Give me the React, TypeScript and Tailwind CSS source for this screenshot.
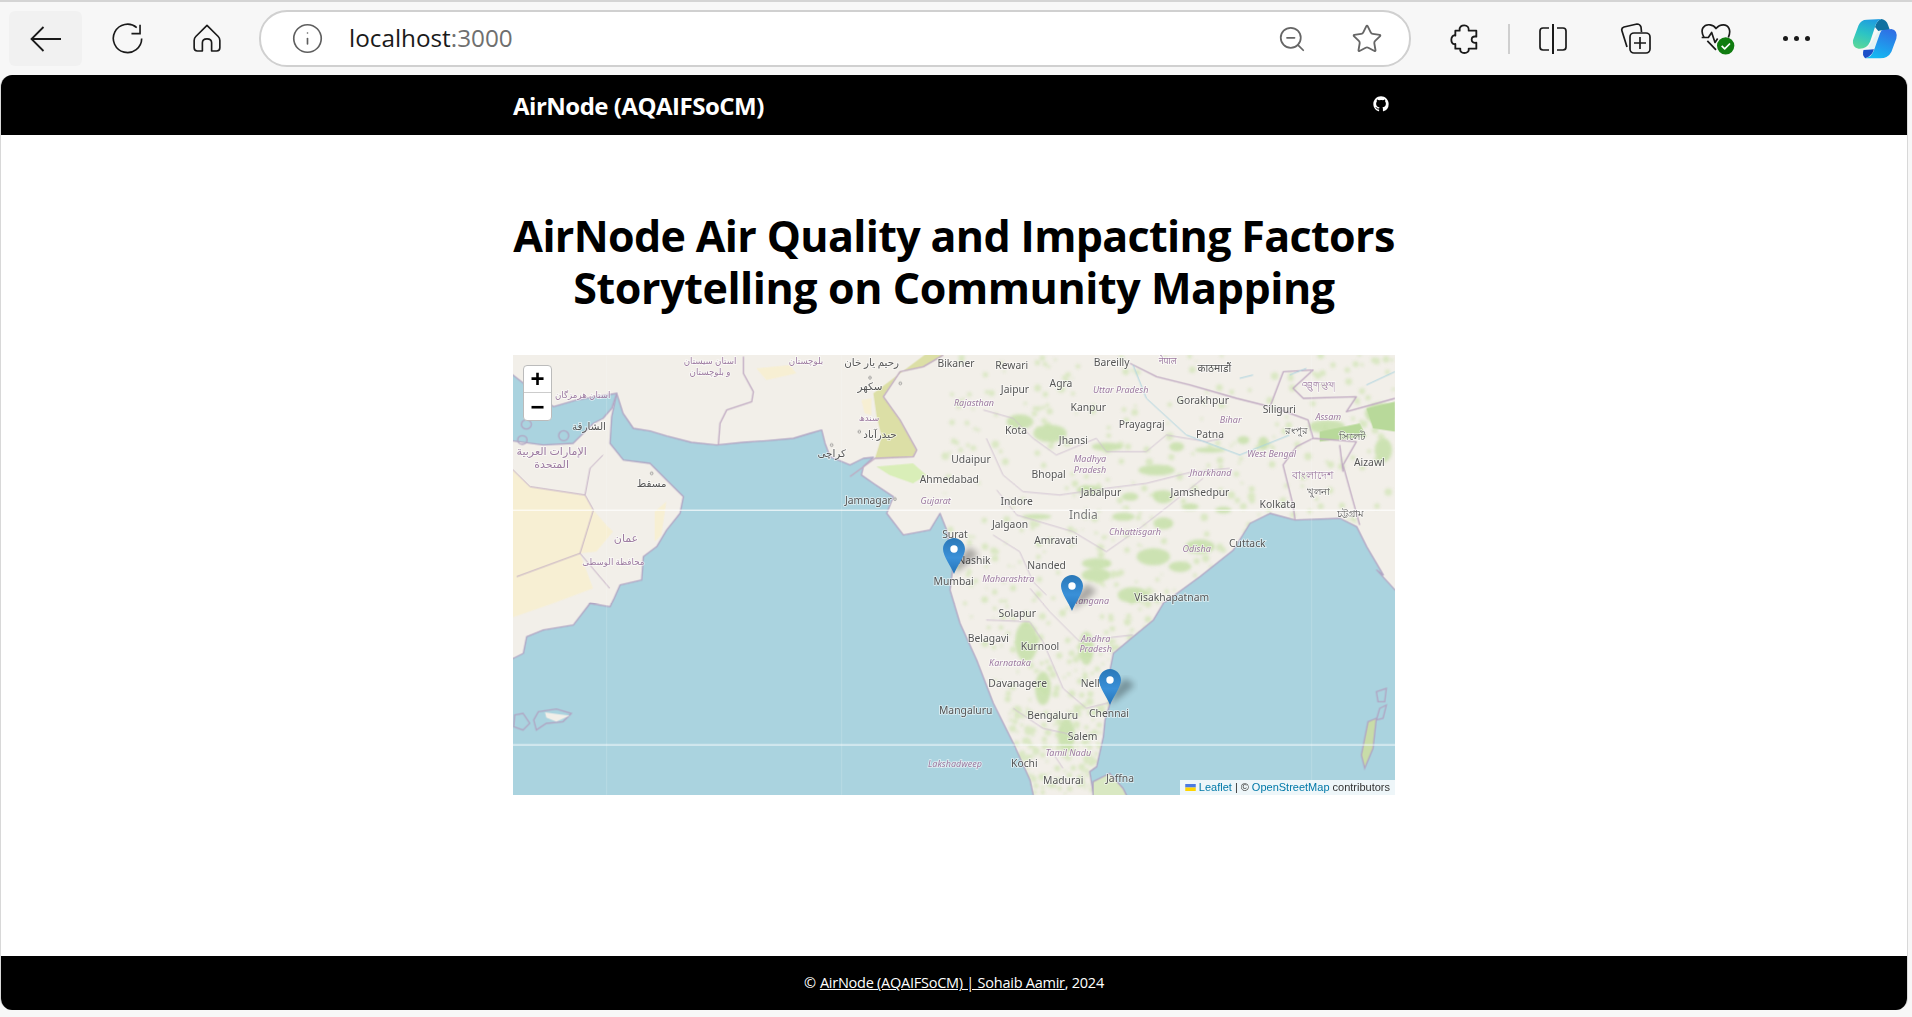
import { Info, Star, ZoomOut } from "lucide-react";

const segoe = "font-['Open_Sans','Noto_Sans',sans-serif]";

type Label = [string, number, number, string?];

// positions are in 3x map units, grouped by the crop they were read from
const westLabels: Label[] = [
  ["استان سیستان", 600, 33, "s"], ["و بلوچستان", 600, 67, "s"], ["بلوچستان", 888, 33, "s"],
  ["استان هرمزگان", 218, 135, "s"], ["عمان", 348, 565, "S"], ["محافظة الوسطى", 310, 635, "s"],
  ["الإمارات العربية", 125, 302, "S"], ["المتحدة", 125, 343, "S"], ["سندھ", 1077, 205, "s"],
  ["رحیم یار خان", 1085, 37], ["سکھر", 1080, 110], ["الشارقة", 237, 228], ["مسقط", 425, 400],
  ["کراچی", 965, 310], ["حیدرآباد", 1110, 252], ["Jamnagar", 1075, 450], ["Ahmedabad", 1318, 388],
  ["Gujarat", 1277, 453, "i"], ["Surat", 1335, 553],
];

const eastLabels: Label[] = [
  ["Bikaner", 18, 40], ["Rewari", 185, 47], ["Bareilly", 485, 38], ["नेपाल", 653, 32, "s"], ["काठमाडौं", 793, 55],
  ["འབྲུག་ཡུལ།", 1105, 105, "s"], ["Agra", 333, 100], ["Jaipur", 195, 118], ["Uttar Pradesh", 512, 121, "i"], ["Kanpur", 415, 172],
  ["Gorakhpur", 758, 152], ["Rajasthan", 72, 160, "i"], ["Siliguri", 988, 177], ["Assam", 1135, 200, "i"],
  ["Kota", 198, 240], ["Prayagraj", 575, 222], ["Bihar", 842, 210, "i"], ["Patna", 780, 253],
  ["রংপুর", 1040, 240], ["সিলেট", 1205, 258], ["Jhansi", 370, 270], ["Udaipur", 63, 327],
  ["Madhya", 420, 327, "i"], ["Pradesh", 420, 360, "i"], ["West Bengal", 965, 313, "i"], ["Aizawl", 1258, 338],
  ["Bhopal", 296, 372], ["Jharkhand", 782, 368, "i"], ["বাংলাদেশ", 1088, 376, "S"], ["Jabalpur", 453, 428],
  ["Jamshedpur", 750, 428], ["খুলনা", 1105, 423], ["Indore", 200, 454], ["Kolkata", 983, 462],
  ["India", 400, 493, "C"], ["চট্টগ্রাম", 1203, 490], ["Jalgaon", 180, 523], ["Chhattisgarh", 555, 547, "i"],
  ["Amravati", 318, 571], ["Cuttack", 892, 581], ["Odisha", 740, 598, "i"], ["Nashik", 72, 632], ["Nanded", 290, 645],
];

const southLabels: Label[] = [
  ["Maharashtra", 175, 28, "i"], ["Mumbai", 11, 35], ["Visakhapatnam", 665, 82], ["Telangana", 415, 93, "i"],
  ["Solapur", 202, 130], ["Belagavi", 115, 205], ["Kurnool", 270, 228], ["Andhra", 437, 207, "i"],
  ["Pradesh", 437, 238, "i"], ["Karnataka", 180, 278, "i"], ["Davanagere", 203, 340], ["Nellore", 445, 340],
  ["Mangaluru", 47, 421], ["Bengaluru", 308, 437], ["Chennai", 477, 430], ["Salem", 398, 498],
  ["Tamil Nadu", 355, 548, "i"], ["Lakshadweep", 15, 581, "i"], ["Kochi", 223, 581], ["Madurai", 340, 630],
  ["Jaffna", 510, 626],
];

const greens: [number, number, number, number][] = [
  [210, 215, 40, 22], [300, 250, 50, 26], [470, 290, 45, 12], [620, 360, 55, 16], [680, 290, 22, 14], [640, 440, 30, 20],
  [420, 420, 40, 14], [540, 440, 25, 12], [1130, 230, 55, 20], [1290, 190, 45, 32], [780, 300, 45, 8], [880, 270, 18, 12],
  [940, 280, 16, 20], [1300, 300, 26, 36], [720, 470, 26, 10], [640, 520, 30, 18], [520, 500, 34, 12],
  [750, 590, 44, 22], [610, 620, 50, 26], [820, 480, 24, 10], [260, 500, 44, 8], [440, 640, 44, 16], [690, 650, 34, 16],
  [229, 875, 34, 60], [279, 1015, 24, 50], [349, 1155, 26, 50], [409, 895, 22, 50], [549, 735, 46, 24], [439, 675, 44, 20],
];

// fine vegetation specks, seeded so the picture stays the same on each load
const specks: [number, number, number][] = [];
let seed = 7;
const rnd = () => {
  seed = (seed * 16807) % 2147483647;
  return seed / 2147483647;
};
for (let i = 0; i < 700; i++) {
  const y = rnd() * 1320;
  const left = y < 650 ? 1290 : 1320 + (y - 650) * 0.35;
  const right = y < 520 ? 2646 : 2300 - (y - 520) * 0.7;
  const x = left + rnd() * (right - left);
  specks.push([Math.round(x), Math.round(y), Math.round(3 + rnd() * 8)]);
}

function MapLabels({ labels }: { labels: Label[] }) {
  return (
    <>
      {labels.map(([text, x, y, kind]) => {
        const purple = kind === "s" || kind === "S" || kind === "i";
        const size = kind === "C" ? 36 : kind === "S" ? 33 : kind === "i" ? 27 : kind === "s" ? 26 : 31;
        return (
          <text
            key={text + x}
            x={x}
            y={y + size * 0.35}
            textAnchor="middle"
            fontSize={size}
            fontStyle={kind === "i" ? "italic" : "normal"}
            fill={purple ? "#9c7aa0" : kind === "C" ? "#7a7a7a" : "#555555"}
            stroke="#ffffff"
            strokeOpacity={0.6}
            strokeWidth={5}
            paintOrder="stroke"
          >
            {text}
          </text>
        );
      })}
    </>
  );
}

function MapArt() {
  return (
    <svg viewBox="0 0 2646 1320" className="block w-full h-full font-['Noto_Sans','DejaVu_Sans',sans-serif]">
      <defs>
        <filter id="soft"><feGaussianBlur stdDeviation="1.8" /></filter>
        <filter id="softer"><feGaussianBlur stdDeviation="4" /></filter>
        <filter id="labels"><feGaussianBlur stdDeviation="0.9" /></filter>
      </defs>
      <rect width="2646" height="1320" fill="#f2efe9" />
      <g filter="url(#soft)">
        <path fill="#f7efd3" d="M-10 335 L51 395 L216 420 L241 465 L280 510 L300 530 L250 590 L201 595 L240 700 L120 745 L-10 790 Z" />
        <path fill="#f7efd3" d="M730 40 L830 30 L850 55 L760 75 Z M1045 135 L1075 130 L1075 180 L1055 175 Z M425 470 L460 440 L445 540 L425 560 Z" />
        <path fill="#dcdfa6" d="M1291 0 L1231 35 L1161 50 L1111 125 L1161 195 L1211 285 L1201 305 L1086 310 L1106 245 L1091 185 L1081 115 L1121 85 L1181 40 L1241 -5 Z" />
        <path fill="#d9eeb8" d="M1090 335 L1200 325 L1240 360 L1200 385 L1130 360 Z" />
        <g filter="url(#softer)" fill="#cfe4b2" opacity="0.7">
          {specks.map(([cx, cy, r], i) => <circle key={i} cx={cx} cy={cy} r={r} />)}
        </g>
        <g transform="translate(1311,-15)" filter="url(#softer)" fill="#c6e0a9" opacity="0.85">
          {greens.map(([cx, cy, rx, ry]) => <ellipse key={cx + "-" + cy} cx={cx} cy={cy} rx={rx} ry={ry} />)}
        </g>
        <path fill="#b8d99a" d="M2420 230 L2540 205 L2560 245 L2420 260 Z M2560 160 L2646 140 L2646 230 L2580 220 Z" />

        {/* sea */}
        <g fill="#aad3df" stroke="#b1a6c4" strokeWidth="4" strokeLinejoin="round">
          <path d="M311 115 L330 175 L361 220 L411 228 L461 243 L535 262 L611 270 L690 262 L761 257 L841 250 L891 235 L926 225 L936 265 L951 305 L1011 330 L1051 310 L1081 307 L1051 335 L1045 360 L1081 385 L1141 425 L1121 475 L1171 540 L1251 525 L1281 475 L1301 525 L1321 625 L1311 705 L1341 805 L1391 915 L1441 1045 L1501 1165 L1551 1275 L1565 1340 L-20 1340 L-20 915 L1 910 L31 895 L41 845 L91 825 L181 810 L231 745 L291 755 L301 735 L321 690 L386 675 L391 605 L431 575 L461 525 L501 475 L511 425 L461 375 L411 325 L331 315 L291 265 L296 185 Z" />
          <path d="M2666 705 L2646 705 L2591 645 L2611 660 L2561 575 L2531 515 L2481 490 L2346 495 L2271 475 L2211 505 L2161 585 L2061 665 L1951 745 L1921 795 L1861 845 L1801 895 L1791 945 L1791 1045 L1776 1095 L1771 1145 L1751 1235 L1730 1250 L1745 1340 L2666 1340 Z" />
          <path d="M-20 50 L0 60 L121 155 L191 135 L311 115 L296 160 L270 190 L241 205 L180 265 L91 270 L-20 255 Z" />
        </g>
        <g fill="#f2efe9" stroke="#b1a6c4" strokeWidth="4">
          <path d="M1740 1280 L1790 1255 L1830 1300 L1850 1340 L1740 1340 Z" fill="#d9e8c2" />
          <path d="M76 1070 L130 1062 L175 1075 L150 1100 L100 1105 L70 1125 L62 1095 Z" fill="#aad3df" />
          <path d="M96 1072 L140 1078 L170 1082 L130 1100 L100 1088 Z" stroke="none" />
          <path d="M5 1080 L30 1075 L50 1105 L30 1125 L2 1115 Z" fill="#aad3df" />
          <path d="M2590 1010 L2620 1000 L2615 1040 L2595 1040 Z" fill="#aad3df" />
          <path d="M2600 1060 L2620 1050 L2610 1090 L2590 1095 Z" fill="#aad3df" />
          <path d="M2565 1100 L2590 1090 L2580 1180 L2555 1240 L2545 1200 Z" fill="#c8dca8" />
          <ellipse cx="40" cy="208" rx="15" ry="14" fill="none" />
          <ellipse cx="28" cy="255" rx="14" ry="13" fill="none" />
          <ellipse cx="152" cy="242" rx="15" ry="15" fill="none" />
        </g>

        {/* borders */}
        <g fill="none" stroke="#c0aac2" strokeWidth="4" strokeLinejoin="round">
          <path d="M691 5 L691 55 L721 110 L716 140 L641 165 L621 205 L616 270" />
          <path d="M-10 335 L51 395 L216 420 L241 465 L201 595 L11 665 M216 420 L231 340 L270 300 M201 595 L290 700" strokeWidth="3" />
          <path d="M1291 0 L1231 35 L1161 50 L1111 125 L1161 195 L1211 285 L1201 305 L1086 310 L1011 365" />
          <path d="M1851 25 L1931 65 L2031 90 L2171 130 L2271 155 L2311 50 L2400 45 L2340 100 L2371 130 L2530 125 L2500 170 L2646 130" />
          <path d="M2290 160 L2385 195 L2400 250 L2350 275 L2310 330 L2340 450 L2346 495 M2400 250 L2530 260 L2490 330 L2540 510 M2480 270 L2490 350" />
        </g>
        <g fill="none" stroke="#cdbccf" strokeWidth="2.5">
          <path d="M1411 165 L1500 190 L1560 250 L1630 300 L1750 250 L1780 290 L1900 290 L1960 240 L2080 260 L2130 250 M1420 250 L1470 360 L1530 410 L1640 420 L1780 400 L1900 385 L2040 350 L2150 340" />
          <path d="M1451 405 L1511 480 L1680 530 L1780 590 L1880 520 L1970 450 L2070 370 M1551 700 L1610 770 L1700 860 L1770 850 L1860 840 M1420 795 L1550 800 L1590 860 L1650 1000 L1720 1060 L1800 1040" />
          <path d="M1440 540 L1520 590 L1560 680 L1600 720 M1500 1060 L1590 1120 L1680 1140 M1610 1180 L1650 1240" />
        </g>
        <g fill="none" stroke="#aad3df" strokeWidth="3">
          <path d="M1860 30 L1900 130 L2020 240 L2180 300 L2330 240 M2560 90 L2646 50 M2180 70 L2220 60 M2330 60 L2380 40" />
        </g>
      </g>

      {/* tile seams */}
      <g stroke="#ffffff" strokeOpacity="0.25" strokeWidth="2">
        <line x1="281" y1="0" x2="281" y2="1320" />
        <line x1="986" y1="0" x2="986" y2="1320" />
        <line x1="2396" y1="0" x2="2396" y2="1320" />
      </g>
      <rect x="0" y="464" width="2646" height="3" fill="#ffffff" />
      <rect x="0" y="1168" width="2646" height="3" fill="#ffffff" />

      <g fill="#f2efe9" stroke="#777777" strokeWidth="2">
        {[[416, 355], [1162, 85], [1071, 68], [956, 270], [1146, 432], [1039, 230]].map(([cx, cy]) => (
          <circle key={cx} cx={cx} cy={cy} r="4" />
        ))}
      </g>

      <g filter="url(#labels)">
        <g transform="translate(-9,-15)"><MapLabels labels={westLabels} /></g>
        <g transform="translate(1311,-15)"><MapLabels labels={eastLabels} /></g>
        <g transform="translate(1311,645)"><MapLabels labels={southLabels} /></g>
      </g>
    </svg>
  );
}

function Marker({ className }: { className: string }) {
  return (
    <svg viewBox="0 0 44 36" className={"absolute w-[44px] h-[36px] overflow-visible " + className}>
      <defs>
        <linearGradient id="pin" x1="0" y1="0" x2="0" y2="1">
          <stop offset="0" stopColor="#2a78b8" />
          <stop offset="0.55" stopColor="#3a90d8" />
          <stop offset="1" stopColor="#2474b8" />
        </linearGradient>
        <filter id="pinshadow"><feGaussianBlur stdDeviation="3" /></filter>
      </defs>
      <path d="M11 36 L24 26 L36 16 L26 9 L16 20 Z" fill="#000" opacity="0.3" filter="url(#pinshadow)" />
      <path d="M11 36 C8 28 0 18 0 11 C0 5 5 0 11 0 C17 0 22 5 22 11 C22 18 14 28 11 36 Z" fill="url(#pin)" />
      <circle cx="11" cy="11" r="3.7" fill="#ffffff" />
    </svg>
  );
}

function CopilotLogo() {
  return (
    <svg viewBox="485 24 140 122" className="w-[46px] h-[41px]">
      <defs>
        <linearGradient id="cpA" x1="0.6" y1="0" x2="0.3" y2="1">
          <stop offset="0" stopColor="#1f9de0" />
          <stop offset="0.5" stopColor="#2cc4c4" />
          <stop offset="1" stopColor="#5ad79a" />
        </linearGradient>
        <linearGradient id="cpB" x1="0.7" y1="0" x2="0.3" y2="1">
          <stop offset="0" stopColor="#2f6fe4" />
          <stop offset="1" stopColor="#15baf2" />
        </linearGradient>
      </defs>
      <path d="M575 26 Q590 28 595 45 L600 58 L565 62 L555 50 Q560 30 575 26 Z" fill="#10709f" />
      <path d="M530 28 L575 26 Q560 30 555 50 L540 95 Q530 118 505 116 Q485 112 488 90 L505 45 Q512 28 530 28 Z" fill="url(#cpA)" />
      <path d="M565 62 L578 60 L548 122 L535 112 Z" fill="#e4f3f4" />
      <path d="M575 60 L605 56 Q625 60 620 85 L605 125 Q595 145 570 145 L525 145 Q545 142 552 120 L570 70 Z" fill="url(#cpB)" />
      <path d="M520 120 L552 118 Q545 140 525 145 Q515 135 520 120 Z" fill="#1c4fc8" />
    </svg>
  );
}

function BrowserBar() {
  return (
    <div className="h-[75px] shrink-0 bg-[#f7f7f7] flex items-center relative border-t-2 border-[#d4d4d4] text-[#1a1a1a]">
      <div className="ml-[9px] w-[73px] h-[55px] rounded-md bg-[#f1f1f1] flex items-center justify-center">
        <svg viewBox="0 0 32 26" className="w-[32px] h-[26px]" fill="none" stroke="currentColor" strokeWidth="1.8">
          <path d="M31 13 H2 M13.5 1 L1.5 13 L13.5 25" />
        </svg>
      </div>
      <div className="ml-[5px] w-[80px] flex justify-center">
        <svg viewBox="30 38 100 98" className="w-[33px] h-[33px]" fill="none" stroke="currentColor" strokeWidth="5">
          <path d="M108 54 A43 43 0 1 0 123 87 M118 45 V72 H92" />
        </svg>
      </div>
      <div className="w-[80px] flex justify-center">
        <svg viewBox="279 40 84 88" className="w-[28px] h-[29px]" fill="none" stroke="currentColor" strokeWidth="5" strokeLinejoin="round">
          <path d="M321 44 L355 78 Q360 83 360 90 V112 Q360 122 350 122 H335 V97 Q335 85 321 85 Q307 85 307 97 V122 H292 Q282 122 282 112 V90 Q282 83 287 78 Z" />
        </svg>
      </div>
      <div className="ml-[12px] w-[1152px] h-[57px] rounded-[28px] border-2 border-[#d0d0d0] bg-white flex items-center">
        <Info className="ml-[30px] w-[33px] h-[33px] text-[#5f5f5f]" strokeWidth={1.2} />
        <span className={"ml-[25px] text-[24.3px] leading-none " + segoe}>
          localhost<span className="text-[#6f6f6f]">:3000</span>
        </span>
        <div className="ml-auto flex items-center">
          <ZoomOut className="w-[30px] h-[30px] text-[#666]" strokeWidth={1.4} />
          <Star className="ml-[44px] mr-[26px] w-[32px] h-[32px] text-[#666]" strokeWidth={1.4} />
        </div>
      </div>
      <div className="ml-[13px] w-[80px] flex justify-center">
        <svg viewBox="30 38 82 90" className="w-[28px] h-[30px]" fill="none" stroke="currentColor" strokeWidth="5.5" strokeLinejoin="round">
          <path d="M45 58 H58 C56 46 64 42 72 42 C80 42 87 48 85 58 H108 V76 C96 74 94 80 94 85 C94 92 100 96 108 94 V112 H85 C87 120 80 125 72 125 C64 125 58 120 60 112 H45 V98 C36 100 33 92 33 85 C33 78 38 70 45 73 Z" />
        </svg>
      </div>
      <div className="w-[2px] h-[30px] bg-[#cfcfcf] ml-[4px]" />
      <div className="ml-[3px] w-[80px] flex justify-center">
        <svg viewBox="0 0 30 32" className="w-[30px] h-[32px]" fill="none" stroke="currentColor" strokeWidth="1.7">
          <path d="M11 5 H5 Q2 5 2 8 V24 Q2 27 5 27 H11 M19 5 H25 Q28 5 28 8 V24 Q28 27 25 27 H19" />
          <path d="M15 1 V31" strokeWidth="2" />
        </svg>
      </div>
      <div className="ml-[3px] w-[80px] flex justify-center">
        <svg viewBox="0 0 32 32" className="w-[32px] h-[32px]" fill="none" stroke="currentColor" strokeWidth="1.7" strokeLinejoin="round">
          <path d="M7 24 L2 8 Q1 5 4 4 L17 1 Q20 1 21 4 L21.5 9" />
          <rect x="10" y="10" width="20" height="20" rx="4" />
          <path d="M20 14 V26 M14 20 H26" />
        </svg>
      </div>
      <div className="ml-[2px] w-[80px] flex justify-center">
        <svg viewBox="33 42 105 95" className="w-[35px] h-[32px]" fill="none" stroke="currentColor" strokeWidth="5" strokeLinejoin="round">
          <path d="M42 85 C28 60 42 45 60 47 C70 48 75 53 78 58 C82 53 88 47 100 47 C115 47 125 62 115 85" />
          <path d="M35 85 H55 L65 70 L75 100 L83 88 M52 95 L78 122" />
          <circle cx="107" cy="110" r="26" fill="#107c10" stroke="none" />
          <path d="M95 110 L104 119 L120 103" stroke="#ffffff" />
        </svg>
      </div>
      <div className="w-[76px] flex justify-center">
        <div className="flex gap-[6px]">
          <span className="w-[5px] h-[5px] rounded-full bg-[#1a1a1a]" />
          <span className="w-[5px] h-[5px] rounded-full bg-[#1a1a1a]" />
          <span className="w-[5px] h-[5px] rounded-full bg-[#1a1a1a]" />
        </div>
      </div>
      <div className="ml-[18px]"><CopilotLogo /></div>
    </div>
  );
}

export default function App() {
  return (
    <div className="h-screen flex flex-col bg-[#f7f7f7] overflow-hidden">
      <BrowserBar />
      <div className={"flex-1 flex flex-col mr-[4px] mb-[7px] rounded-[12px] overflow-hidden bg-white border-x border-[#d8d8d8] " + segoe}>
        <header className="h-[60px] shrink-0 bg-black text-white">
          <div className="w-[882px] mx-auto h-full flex items-center justify-between">
            <span className="pt-[1px] text-[24px] font-bold tracking-[-0.5px]">AirNode (AQAIFSoCM)</span>
            <svg viewBox="0 0 24 24" className="w-[16px] h-[16px] mr-[6px] mb-[3px]" fill="currentColor">
              <path d="M12 .5C5.65.5.5 5.65.5 12c0 5.08 3.29 9.39 7.86 10.91.58.11.79-.25.79-.55v-2.14c-3.2.7-3.87-1.36-3.87-1.36-.52-1.33-1.28-1.68-1.28-1.68-1.05-.71.08-.7.08-.7 1.15.08 1.76 1.19 1.76 1.19 1.03 1.76 2.69 1.25 3.35.96.1-.75.4-1.25.73-1.54-2.55-.29-5.24-1.28-5.24-5.69 0-1.26.45-2.28 1.19-3.09-.12-.29-.52-1.46.11-3.05 0 0 .97-.31 3.17 1.18A11 11 0 0 1 12 6.07c.98 0 1.96.13 2.88.39 2.2-1.49 3.16-1.18 3.16-1.18.63 1.59.23 2.76.12 3.05.74.81 1.18 1.83 1.18 3.09 0 4.42-2.69 5.39-5.25 5.68.41.36.78 1.06.78 2.13v3.16c0 .3.21.67.8.55A11.5 11.5 0 0 0 23.5 12C23.5 5.65 18.35.5 12 .5Z" />
            </svg>
          </div>
        </header>

        <main className="flex-1 w-[882px] mx-auto">
          <h1 className="mt-[75px] text-center text-[43px] leading-[52px] font-bold text-black tracking-[-0.65px] whitespace-nowrap">
            AirNode Air Quality and Impacting Factors
            <br />
            <span className="tracking-[-0.42px]">Storytelling on Community Mapping</span>
          </h1>
          <div className="relative mt-[41px] h-[440px] overflow-hidden bg-[#aad3df]">
            <MapArt />
            <Marker className="left-[430px] top-[183px]" />
            <Marker className="left-[548px] top-[220px]" />
            <Marker className="left-[586px] top-[314px]" />
            <div className="absolute left-[10px] top-[10px] w-[29px] rounded-[4px] border border-[#bbb] bg-white overflow-hidden font-['Liberation_Sans',sans-serif] text-black">
              <div className="h-[27px] flex items-center justify-center border-b border-[#ccc] text-[24px] font-bold leading-none">+</div>
              <div className="h-[27px] flex items-center justify-center text-[24px] font-bold leading-none">−</div>
            </div>
            <div className="absolute right-0 bottom-0 h-[15px] w-[215px] bg-white/80 flex items-center justify-end pr-[5px] whitespace-nowrap text-[11px] leading-none text-[#333] font-['Liberation_Sans',sans-serif]">
              <svg viewBox="0 0 12 8" className="w-[11px] h-[7px] mr-[3px]">
                <rect width="12" height="4" fill="#4C7BE1" />
                <rect y="4" width="12" height="4" fill="#FFD500" />
              </svg>
              <span className="text-[#0078a8]">Leaflet</span>
              <span className="mx-[3px]">|</span>©
              <span className="ml-[3px] text-[#0078a8]">OpenStreetMap</span>
              <span className="ml-[3px]">contributors</span>
            </div>
          </div>
        </main>

        <footer className="h-[54px] shrink-0 bg-black text-white flex items-center justify-center text-[14.5px] tracking-[-0.25px]">
          © <span className="ml-1 underline">AirNode (AQAIFSoCM) | Sohaib Aamir</span>, 2024
        </footer>
      </div>
    </div>
  );
}
